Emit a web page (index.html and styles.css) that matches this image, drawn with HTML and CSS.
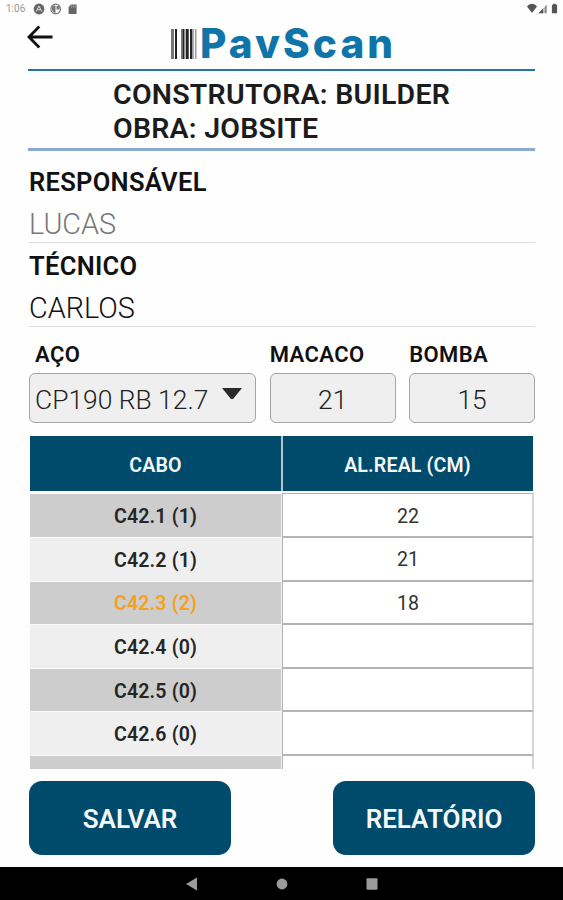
FILE: index.html
```html
<!DOCTYPE html>
<html lang="pt-BR">
<head>
  <meta charset="UTF-8" />
  <meta name="viewport" content="width=device-width, initial-scale=1.0"/>
  <title>PavScan</title>
  <link rel="stylesheet" href="styles.css">
</head>
<body>

  <div class="status-bar">
    <span class="time">1:06</span>
    <svg class="status-left" width="46" height="12" viewBox="0 0 46 12">
      <circle cx="6" cy="6" r="5.4" fill="#666"/>
      <path d="M3.2 8.6L6 3l2.8 5.6M4.4 6.8h3.2" fill="none" stroke="#ddd" stroke-width="1"/>
      <circle cx="22.7" cy="6" r="4.8" fill="#fff" stroke="#777" stroke-width="1.2"/>
      <path d="M19.5 2.5h3v7.5c-3-.5-4.5-4-3-7.5zM23.5 3h3v3.5h-3z" fill="#777"/>
      <path d="M38 1.5h5.6v9.5h-8V4z" fill="#666"/>
      <path d="M38.5 2.5v2M40.3 2.5v2M42.1 2.5v2" stroke="#bbb" stroke-width=".7"/>
    </svg>
    <svg class="status-right" width="34" height="12" viewBox="0 0 34 12">
      <path d="M2 3.5C5-.1 9-.1 12 3.5L7 10z" fill="#555"/>
      <path d="M13.5 10.2L21.5 2v8.2z" fill="#bbb"/>
      <path d="M13.5 10.2L18 5.7v4.5z" fill="#555"/>
      <path d="M20.3 3.2l1.2-1.2v8.2h-1.2z" fill="#777"/>
      <path d="M28.2 1.7v-1h2.6v1h1.3v8.6h-5.2V1.7z" fill="#555"/>
    </svg>
  </div>

  <header>
    <a class="back">
      <svg width="27" height="24" viewBox="0 0 27 24">
        <path d="M12.3 1.5L2 12l10.3 10.4M2.5 12H25.5" fill="none" stroke="#111" stroke-width="2.8"/>
      </svg>
    </a>
    <h1 class="logo">
      <svg width="26" height="30" viewBox="0 0 26 30">
        <path d="M0 0h3v30H0zM10 0h1.5v30H10z" fill="#777"/>
        <path d="M4 0h2v30H4zM11.5 0h2v30h-2zM14.7 0h3v30h-3zM19 0h2.4v30H19z" fill="#222"/>
        <path d="M21.4 0h1.4v30h-1.4zM24 0h1.5v30H24z" fill="#999"/>
      </svg>
      <span>PavScan</span>
    </h1>
  </header>

  <main>
    <section class="site">
      <p class="site-builder">CONSTRUTORA: BUILDER</p>
      <p class="site-job">OBRA: JOBSITE</p>
    </section>

    <section class="people">
      <div class="field">
        <h3>RESPONSÁVEL</h3>
        <p class="muted">LUCAS</p>
      </div>
      <div class="field">
        <h3>TÉCNICO</h3>
        <p>CARLOS</p>
      </div>
    </section>

    <section class="setup">
      <div class="option steel">
        <h4>AÇO</h4>
        <div class="box">
          <span>CP190 RB 12.7</span>
          <svg width="20" height="12" viewBox="0 0 20 12">
            <path d="M0 0h20L11.5 10.5q-1.5 1.5-3 0z" fill="#2b2b2b"/>
          </svg>
        </div>
      </div>
      <div class="option">
        <h4>MACACO</h4>
        <div class="box">21</div>
      </div>
      <div class="option">
        <h4>BOMBA</h4>
        <div class="box">15</div>
      </div>
    </section>

    <section class="cables">
      <div class="row head">
        <div class="cell">CABO</div>
        <div class="cell">AL.REAL (CM)</div>
      </div>
      <div class="row">
        <div class="name">C42.1 (1)</div>
        <div class="value">22</div>
      </div>
      <div class="row">
        <div class="name">C42.2 (1)</div>
        <div class="value">21</div>
      </div>
      <div class="row">
        <div class="name warning">C42.3 (2)</div>
        <div class="value">18</div>
      </div>
      <div class="row">
        <div class="name">C42.4 (0)</div>
        <div class="value"></div>
      </div>
      <div class="row">
        <div class="name">C42.5 (0)</div>
        <div class="value"></div>
      </div>
      <div class="row">
        <div class="name">C42.6 (0)</div>
        <div class="value"></div>
      </div>
      <div class="row">
        <div class="name"></div>
        <div class="value"></div>
      </div>
    </section>

    <div class="actions">
      <button type="button">SALVAR</button>
      <button type="button">RELATÓRIO</button>
    </div>
  </main>

  <footer>
    <svg width="12" height="14" viewBox="0 0 12 14"><path d="M0 7L11 .5v13z" fill="#9a9a9a"/></svg>
    <svg width="12" height="12" viewBox="0 0 12 12"><circle cx="6" cy="6" r="5.4" fill="#9a9a9a"/></svg>
    <svg width="12" height="12" viewBox="0 0 12 12"><rect x=".5" y=".3" width="11" height="11.4" rx="1" fill="#9a9a9a"/></svg>
  </footer>

</body>
</html>
```
FILE: styles.css
```css
* {
  margin: 0;
  padding: 0;
  box-sizing: border-box;
}
body {
  font-family: Roboto, "Liberation Sans", sans-serif;
  background: #fefefe;
  color: #111;
  width: 563px;
  height: 900px;
  overflow: hidden;
  display: flex;
  flex-direction: column;
}
svg {
  display: block;
  flex: none;
}
.status-bar {
  height: 18px;
  padding: 3px 4px 0 6px;
  display: flex;
  align-items: flex-start;
}
.time {
  width: 27px;
  font-size: 10px;
  line-height: 12px;
  color: #999;
}
.status-right {
  margin-left: auto;
}
header {
  height: 53px;
  margin: 0 28px;
  border-bottom: 2px solid #2a72a5;
  display: flex;
}
.back {
  width: 143px;
  padding-top: 7px;
}
.back svg {
  margin-left: -1px;
}
.logo {
  display: flex;
  padding-top: 11px;
  font-family: Inter, sans-serif;
  font-size: 40.5px;
  font-weight: 800;
  line-height: 30px;
  letter-spacing: 3.1px;
  color: #0f75a8;
}
.logo span {
  margin-left: 3px;
}
main {
  padding: 0 28px;
  height: 796px;
}
.site {
  height: 80px;
  padding: 7px 0 0 85px;
  border-bottom: 3px solid #8aabcd;
  font-size: 28.5px;
  font-weight: 600;
  line-height: 34px;
  letter-spacing: 0.25px;
  color: #1c1c1c;
}
.field {
  height: 84px;
  margin-left: 1px;
  border-bottom: 1px solid #dcdcdc;
  padding-top: 7px;
}
.people .field:first-child {
  height: 92px;
  padding-top: 15px;
}
.field h3 {
  font-size: 25.5px;
  font-weight: 600;
  line-height: 32px;
  letter-spacing: 0.3px;
}
.field p {
  margin-top: 10px;
  font-size: 28.8px;
  font-weight: 300;
  line-height: 32px;
}
.field .muted {
  color: #777;
}
.setup {
  display: flex;
  gap: 13.5px;
  padding: 15px 0 0 1px;
}
.option {
  width: 126px;
}
.steel {
  width: 227.5px;
}
.option h4 {
  font-size: 22px;
  font-weight: 600;
  line-height: 26px;
  letter-spacing: 0.4px;
  margin-bottom: 5px;
}
.steel h4 {
  padding-left: 6px;
}
.box {
  height: 50px;
  border: 1px solid #a5a5a5;
  border-radius: 6px;
  background: #efefef;
  display: flex;
  justify-content: center;
  align-items: center;
  padding-top: 3px;
  font-size: 26.4px;
  font-weight: 300;
  color: #222;
}
.steel .box {
  justify-content: space-between;
  padding: 3px 13px 0 5px;
}
.steel svg {
  margin-bottom: 12px;
}
/* list is taller than its window, so the last row is cut */
.cables {
  height: 333px;
  margin: 13px 0 0 2px;
  overflow: hidden;
  font-size: 20px;
}
.row {
  display: grid;
  grid-template-columns: 252px 252px;
  height: 43.6px;
}
.head {
  height: 57.4px;
  padding-bottom: 2px;
}
.cell {
  background: #004a6b;
  color: #f5f7f9;
  font-weight: 600;
  font-size: 19.6px;
  letter-spacing: 0.15px;
  display: flex;
  align-items: center;
  justify-content: center;
  padding: 3px 1px 0 0;
}
.cell + .cell {
  border-left: 2px solid #b5c4ce;
  margin: 0 1px 0 -1px;
}
.name, .value {
  display: flex;
  align-items: center;
  justify-content: center;
}
.name {
  background: #efefef;
  border-top: 1px solid #fafafa;
  border-right: 1px solid #efefef;
  font-weight: 600;
  font-size: 19.6px;
  letter-spacing: 0.15px;
  color: #262626;
  padding-top: 2px;
}
.row:nth-child(even) .name {
  background: #cdcdcd;
}
.name.warning {
  color: #f5a11c;
}
.value {
  border: 1px solid #b4b4b4;
  border-right: 2px solid #d6d6d6;
  background: #fff;
  font-size: 19.6px;
  color: #333;
  padding: 2px 0 0 1px;
}
.actions {
  margin: 12px 0 0 1px;
  display: flex;
  justify-content: space-between;
}
.actions button {
  width: 202px;
  height: 74px;
  border: none;
  border-radius: 13px;
  background: #004a6b;
  color: #f5f7f9;
  font-family: inherit;
  font-size: 26px;
  font-weight: 600;
  padding-top: 2px;
}
footer {
  height: 33px;
  background: #000;
  display: flex;
  justify-content: center;
  align-items: center;
  gap: 78px;
}
```
